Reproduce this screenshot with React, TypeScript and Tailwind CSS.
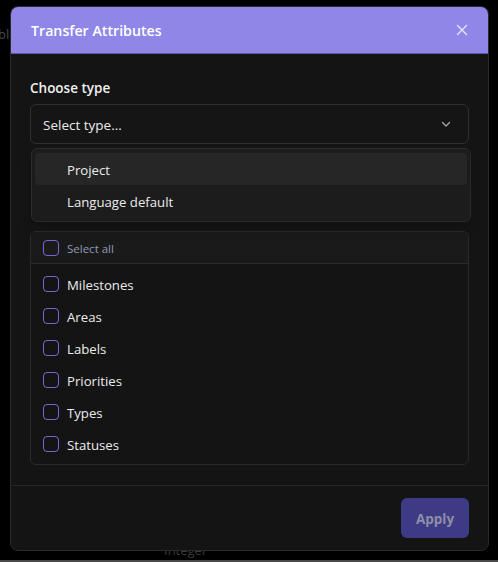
import React from "react";

const items = ["Milestones", "Areas", "Labels", "Priorities", "Types", "Statuses"];

function Checkbox() {
  return <span className="block w-4 h-4 shrink-0 rounded-[4px] border border-[#7667d6] bg-transparent" />;
}

export default function App() {
  return (
    <div
      className="relative w-[498px] h-[562px] overflow-hidden bg-black"
      style={{ fontFamily: '"Open Sans", "Noto Sans", sans-serif' }}
    >
      {/* background page */}
      <div className="absolute left-[-2px] top-[25px] text-[13px] text-[#4a4a4a]">bli</div>
      <div className="absolute left-[164px] top-[541px] text-[13px] text-[#3a3a3a]">Integer</div>
      <div className="absolute left-0 right-0 bottom-0 h-[2px] bg-[#4a4a4a]" />

      {/* modal */}
      <div className="absolute left-[10px] top-[6px] w-[479px] flex flex-col rounded-lg border border-[#2a2a2a] bg-[#141414] overflow-hidden">
        <div className="h-[47px] flex items-center justify-between px-[19px] bg-[#8f86e8] border-b border-[#5e58a8]">
          <span className="pl-px pt-[2px] text-[14.2px] font-semibold text-white">Transfer Attributes</span>
          <svg width="14" height="14" viewBox="0 0 14 14" fill="none" stroke="#e6e2ff" strokeWidth="1.4" strokeLinecap="round">
            <path d="M2.5 2.5 L11.5 11.5 M11.5 2.5 L2.5 11.5" />
          </svg>
        </div>

        <div className="px-[19px] pt-6 pb-5 flex flex-col">
          <div className="text-[13.5px] font-semibold text-[#f0f0f0] leading-5">Choose type</div>
          <div className="relative mt-1.5">
            <div className="h-10 flex items-center justify-between rounded-md border border-[#2f2f2f] bg-[#151515] pl-3 pr-4">
              <span className="pt-[2px] text-[13.5px] text-[#ececec]">Select type...</span>
              <svg width="12" height="12" viewBox="0 0 12 12" fill="none" stroke="#a8a8a8" strokeWidth="1.3" strokeLinecap="round" strokeLinejoin="round">
                <path d="M2.5 4.5 L6 8 L9.5 4.5" />
              </svg>
            </div>
            <div className="absolute left-px top-11 w-[440px] z-10 rounded-md border border-[#2b2b2b] bg-[#1c1c1c] px-[3px] py-1 shadow-lg">
              <div className="h-8 flex items-center pl-8 pt-[4px] rounded bg-[#262626] text-[13.2px] text-[#ececec]">Project</div>
              <div className="h-8 flex items-center pl-8 pt-[4px] rounded text-[13.2px] text-[#ececec]">Language default</div>
            </div>
          </div>

          <div className="h-[87px]" />
          <div className="rounded-md border border-[#2a2a2a] overflow-hidden">
            <div className="h-8 flex items-center gap-2 px-3 bg-[#1a1a1a] border-b border-[#2a2a2a]">
              <Checkbox />
              <span className="pt-[2px] text-[11.5px] text-[#8f9bb0]">Select all</span>
            </div>
            <div className="py-1 flex flex-col">
              {items.map((it) => (
                <div key={it} className="h-8 flex items-center gap-2 px-3">
                  <Checkbox />
                  <span className="pt-[4px] text-[13.2px] text-[#ececec]">{it}</span>
                </div>
              ))}
            </div>
          </div>
        </div>

        <div className="border-t border-[#262626] px-[19px] pt-3 pb-3 flex justify-end">
          <button className="h-10 w-[68px] pt-[2px] rounded-md bg-[#3d3b86] text-[13.5px] font-bold text-[#8e8ea4]">Apply</button>
        </div>
      </div>
    </div>
  );
}
